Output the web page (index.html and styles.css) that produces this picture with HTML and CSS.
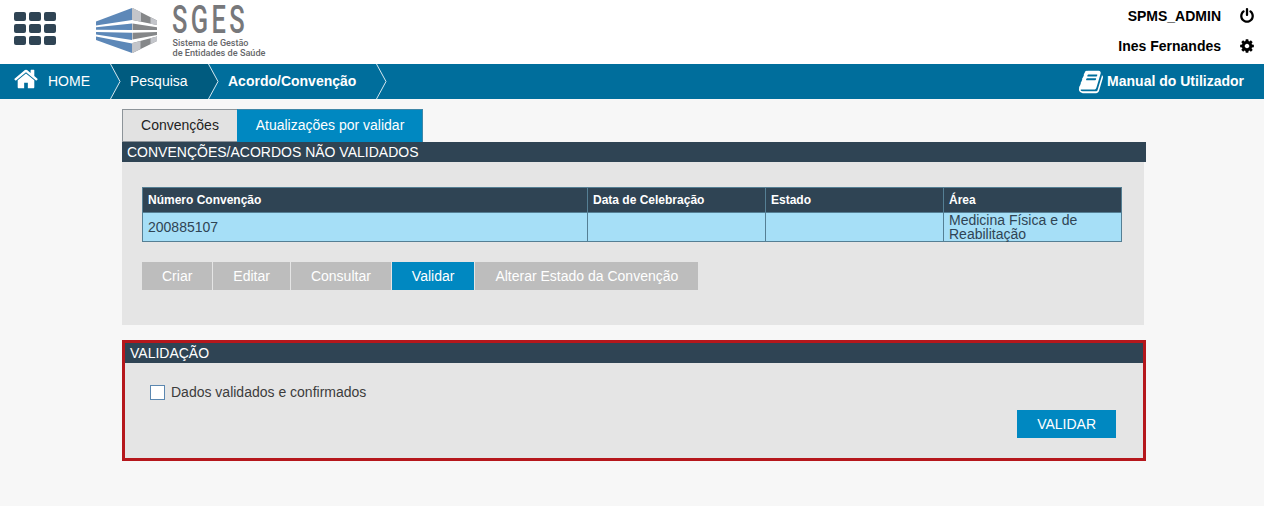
FILE: index.html
```html
<!DOCTYPE html>
<html lang="pt">
<head>
<meta charset="utf-8">
<title>SGES</title>
<link rel="stylesheet" href="styles.css">
</head>
<body>
<header class="top">
  <svg class="grid-icon" width="42" height="33" viewBox="0 0 42 33" fill="#2f4454">
    <rect width="12" height="9" rx="2"/><rect x="15" width="12" height="9" rx="2"/><rect x="30" width="12" height="9" rx="2"/>
    <rect y="12" width="12" height="9" rx="2"/><rect x="15" y="12" width="12" height="9" rx="2"/><rect x="30" y="12" width="12" height="9" rx="2"/>
    <rect y="24" width="12" height="9" rx="2"/><rect x="15" y="24" width="12" height="9" rx="2"/><rect x="30" y="24" width="12" height="9" rx="2"/>
  </svg>
  <svg class="logo" width="180" height="60" viewBox="0 0 180 60">
    <g fill="#5d88b8">
      <path d="M6 21.500 42 8V20L6 25.500Z"/>
      <path d="M6 27.300 42 23.500V30L6 29.800Z"/>
      <path d="M6 32 42 32.700V40L6 34.500Z"/>
      <path d="M6 36.500 42 43.500V53L6 40Z"/>
    </g>
    <g fill="#858789">
      <path d="M42.500 8 67 20.500V25L42.500 20Z"/>
      <path d="M42.500 23.500 67 27.300V30H42.500Z"/>
      <path d="M42.500 32.700 67 32V35L42.500 39.500Z"/>
      <path d="M42.500 43 67 36.500V41L42.500 53Z"/>
    </g>
    <g fill="#c3c5ca">
      <path d="M42.500 8 51 12.300V21.700L42.500 20Z"/>
      <path d="M60.500 17.200 67 20.500V25L60.500 23.700Z"/>
      <path d="M42.500 43 50.500 40.900V49.100L42.500 53Z"/>
      <path d="M60.500 38.200 67 36.500V41L60.500 44.200Z"/>
    </g>
    <text class="logo-name" transform="translate(82 33) scale(.67 1)">SGES</text>
    <text class="logo-sub" x="82.500" y="46" textLength="76" lengthAdjust="spacingAndGlyphs">Sistema de Gestão</text>
    <text class="logo-sub" x="82.500" y="55.500" textLength="93" lengthAdjust="spacingAndGlyphs">de Entidades de Saúde</text>
  </svg>
  <div class="user">
    <div class="user-row"><span>SPMS_ADMIN</span>
      <svg width="16" height="16" viewBox="0 0 1792 1792"><path d="M1664 896q0 156-61 298t-164 245-245 164-298 61-298-61-245-164-164-245-61-298q0-182 80.500-343t226.500-270q43-32 95.500-25t83.500 50q32 42 24.500 94.500t-49.500 84.500q-98 74-151.500 181t-53.500 228q0 104 40.500 198.500t109.500 163.500 163.500 109.500 198.500 40.500 198.500-40.500 163.500-109.500 109.500-163.500 40.500-198.500q0-121-53.500-228t-151.500-181q-42-32-49.500-84.500t24.500-94.500q31-43 84-50t95 25q146 109 226.500 270t80.500 343zm-640-768v640q0 52-38 90t-90 38-90-38-38-90v-640q0-52 38-90t90-38 90 38 38 90z"/></svg>
    </div>
    <div class="user-row"><span>Ines Fernandes</span>
      <svg width="16" height="16" viewBox="0 0 1792 1792"><path d="M1152 896q0-106-75-181t-181-75-181 75-75 181 75 181 181 75 181-75 75-181zm512-109v222q0 12-8 23t-20 13l-185 28q-19 54-39 91 35 50 107 138 10 12 10 25t-9 23q-27 37-99 108t-94 71q-12 0-26-9l-138-108q-44 23-91 38-16 136-29 186-7 28-36 28h-222q-14 0-24.500-8.500t-11.500-21.500l-28-184q-49-16-90-37l-141 107q-10 9-25 9-14 0-25-11-126-114-165-168-7-10-7-23 0-12 8-23 15-21 51-66.500t54-70.500q-27-50-41-99l-183-27q-13-2-21-12.500t-8-23.500v-222q0-12 8-23t19-13l186-28q14-46 39-92-40-57-107-138-10-12-10-24 0-10 9-23 26-36 98.500-107.500t94.500-71.500q13 0 26 10l138 107q44-23 91-38 16-136 29-186 7-28 36-28h222q14 0 24.500 8.500t11.500 21.500l28 184q49 16 90 37l142-107q9-9 24-9 13 0 25 10 129 119 165 170 7 8 7 22 0 12-8 23-15 21-51 66.500t-54 70.500q26 50 41 98l183 28q13 2 21 12.500t8 23.500z"/></svg>
    </div>
  </div>
</header>
<nav class="nav">
  <div class="crumb home">
    <svg class="house" width="24" height="26" viewBox="0 0 1664 1792" fill="#fff"><path d="M1408 992v480q0 26-19 45t-45 19h-384v-384h-256v384h-384q-26 0-45-19t-19-45v-480q0-1 .5-3t.5-3l575-474 575 474q1 2 1 6zm223-69l-62 74q-8 9-21 11h-3q-13 0-21-7l-692-577-692 577q-12 8-24 7-13-2-21-11l-62-74q-8-10-7-23.500t11-21.500l719-599q32-26 76-26t76 26l244 204v-195q0-14 9-23t23-9h192q14 0 23 9t9 23v408l219 182q10 8 11 21.500t-7 23.500z"/></svg>
    <span>HOME</span>
  </div>
  <svg class="chev" width="11" height="35"><path d="M0 0H11V35H0Z" fill="#005b7f"/><path d="M0 0 10 17.500 0 35Z" fill="#006e9c"/><path d="M.5 0 10 17.500 .5 35" fill="none" stroke="#d5e8f0"/></svg>
  <div class="crumb search">Pesquisa</div>
  <svg class="chev" width="11" height="35"><path d="M0 0 10 17.500 0 35Z" fill="#005b7f"/><path d="M.5 0 10 17.500 .5 35" fill="none" stroke="#d5e8f0"/></svg>
  <div class="crumb current">Acordo/Convenção</div>
  <svg class="chev" width="11" height="35"><path d="M.5 0 10 17.500 .5 35" fill="none" stroke="#d5e8f0"/></svg>
  <div class="manual">
    <svg width="26" height="26" viewBox="0 0 1792 1792" fill="#fff"><path d="M1703 478q40 57 18 129l-275 906q-19 64-76.500 107.500t-122.500 43.500h-923q-77 0-148.500-53.500t-99.500-131.500q-24-67-2-127 0-4 3-27t4-37q1-8-3-21.500t-3-19.500q2-11 8-21t16.500-23.500 16.500-23.500q23-38 45-91.500t30-91.500q3-10 .5-30t-.5-28q3-11 17-28t17-23q21-36 42-92t25-90q1-9-2.500-32t.5-28q4-13 22-30.500t22-22.500q19-26 42.500-84.500t27.500-96.500q1-8-3-25.500t-2-26.500q2-8 9-18t18-23 17-21q8-12 16.500-30.500t15-35 16-36 19.500-32 26.500-23.500 36-11.500 47.500 5.500l-1 3q38-9 51-9h761q74 0 114 56t18 130l-274 906q-36 119-71.500 153.500t-128.500 34.500h-869q-27 0-38 15-11 16-1 43 24 70 144 70h923q29 0 56-15.500t35-41.500l300-987q7-22 5-57 38 15 59 43zm-1064 2q-4 13 2 22.500t20 9.500h608q13 0 25.500-9.500t16.500-22.500l21-64q4-13-2-22.500t-20-9.500h-608q-13 0-25.500 9.500t-16.500 22.500zm-83 256q-4 13 2 22.500t20 9.500h608q13 0 25.500-9.500t16.500-22.500l21-64q4-13-2-22.500t-20-9.500h-608q-13 0-25.500 9.500t-16.500 22.500z"/></svg>
    <span>Manual do Utilizador</span>
  </div>
</nav>
<main class="main">
  <div class="tabs">
    <div class="tab">Convenções</div>
    <div class="tab active">Atualizações por validar</div>
  </div>
  <h2 class="title">CONVENÇÕES/ACORDOS NÃO VALIDADOS</h2>
  <section class="panel">
    <table class="table">
      <thead><tr><th class="wide">Número Convenção</th><th>Data de Celebração</th><th>Estado</th><th>Área</th></tr></thead>
      <tbody><tr><td>200885107</td><td></td><td></td><td>Medicina Física e de Reabilitação</td></tr></tbody>
    </table>
    <div class="buttons">
      <button class="btn">Criar</button><button class="btn">Editar</button><button class="btn">Consultar</button><button class="btn primary">Validar</button><button class="btn">Alterar Estado da Convenção</button>
    </div>
  </section>
  <section class="validation">
    <h2 class="title">VALIDAÇÃO</h2>
    <label class="check"><span class="box"></span>Dados validados e confirmados</label>
    <div class="actions"><button class="btn primary">VALIDAR</button></div>
  </section>
</main>
</body>
</html>
```
FILE: styles.css
```css
* { box-sizing: border-box; }
body {
  margin: 0;
  height: 506px;
  overflow: hidden;
  background: #f7f7f7;
  font: 14px/16px "Liberation Sans", Arial, sans-serif;
  color: #3c3c3c;
}
svg { display: block; flex: none; }
.top {
  display: flex;
  height: 64px;
  background: #fff;
  padding-left: 14px;
}
.grid-icon { margin-top: 12px; }
.logo { margin-left: 34px; overflow: visible; }
.logo-name { font: 500 38px Roboto, sans-serif; letter-spacing: 5px; fill: #77787b; }
.logo-sub { font: 500 9px Roboto, sans-serif; fill: #66676a; }
.user {
  margin-left: auto;
  padding: 8px 9px 0 0;
  font-weight: bold;
  color: #000;
}
.user-row {
  display: flex;
  justify-content: flex-end;
  align-items: center;
  gap: 18px;
  height: 16px;
  margin-bottom: 14px;
}
.nav {
  display: flex;
  height: 35px;
  background: #006e9c;
  color: #fff;
  line-height: 35px;
}
.home { display: flex; width: 110px; padding-left: 14px; gap: 10px; }
.house { margin-top: 2px; }
.search { width: 87px; padding-left: 9px; background: #005b7f; }
.current { width: 157px; padding-left: 9px; font-weight: bold; }
.manual {
  display: flex;
  align-items: center;
  gap: 3px;
  margin-left: auto;
  padding-right: 20px;
  font-weight: bold;
}
.main { width: 1024px; margin: 10px 0 0 122px; }
.tabs { display: flex; height: 33px; }
.tab {
  width: 115px;
  border: 1px solid #8d9499;
  border-right: 0;
  background: #e2e2e2;
  color: #222;
  line-height: 31px;
  text-align: center;
}
.tab.active {
  width: 186px;
  background: #0088c1;
  border: 1px solid #3f87a8;
  border-left-color: #0088c1;
  border-bottom: 0;
  color: #fff;
}
.title {
  margin: 0;
  height: 20px;
  padding-left: 5px;
  background: #2f4454;
  color: #fff;
  font-size: 14px;
  font-weight: normal;
  line-height: 20px;
}
.panel {
  width: 1022px;
  height: 163px;
  padding: 25px 20px 0;
  background: #e5e5e5;
}
.table {
  width: 980px;
  table-layout: fixed;
  border-collapse: collapse;
  line-height: 14px;
}
.table th, .table td { border: 1px solid #557f94; padding: 0 5px; text-align: left; }
.table th {
  height: 25px;
  width: 178px;
  background: #2f4454;
  color: #fff;
  font-size: 12px;
}
.table .wide { width: 445px; }
.table td { height: 29px; background: #a6dff7; color: #2f4454; }
.buttons { display: flex; gap: 1px; margin-top: 20px; }
.btn {
  height: 28px;
  padding: 0 20px;
  border: 0;
  background: #bdbdbd;
  color: #fff;
  font: inherit;
}
.btn.primary { background: #0088c1; }
.validation {
  height: 121px;
  margin-top: 15px;
  border: 3px solid #b5171c;
  background: #e5e5e5;
}
.check { display: flex; gap: 6px; margin: 22px 0 0 25px; height: 15px; line-height: 15px; }
.box { width: 15px; height: 15px; border: 1px solid #5b87b0; background: #fff; }
.actions { display: flex; justify-content: flex-end; padding: 10px 27px 0 0; }
```
